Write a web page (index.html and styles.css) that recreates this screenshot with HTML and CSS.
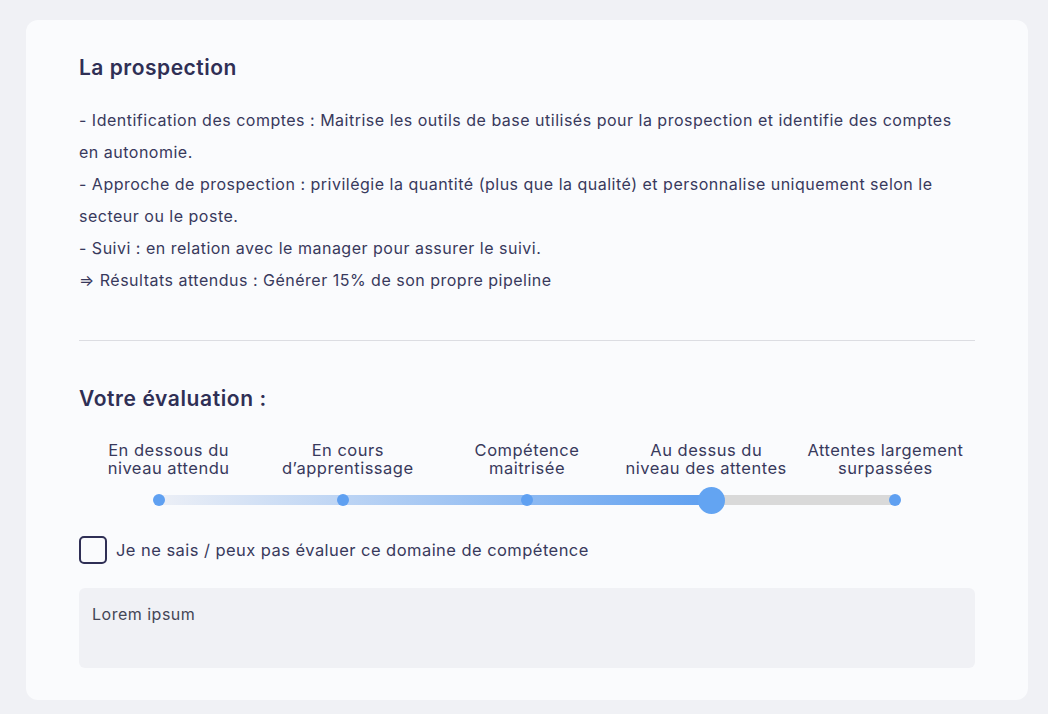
FILE: index.html
```html
<!DOCTYPE html>
<html lang="fr">
<head>
<meta charset="utf-8">
<link rel="stylesheet" href="styles.css">
</head>
<body>
<div class="page">
  <section class="card">
    <h2 class="title">La prospection</h2>
    <div class="desc">
      <p>- Identification des comptes : Maitrise les outils de base utilisés pour la prospection et identifie des comptes en autonomie.</p>
      <p>- Approche de prospection : privilégie la quantité (plus que la qualité) et personnalise uniquement selon le secteur ou le poste.</p>
      <p>- Suivi : en relation avec le manager pour assurer le suivi.</p>
      <p>⇒ Résultats attendus : Générer 15% de son propre pipeline</p>
    </div>
    <hr class="divider">
    <h2 class="eval-title">Votre évaluation :</h2>
    <div class="slider">
      <div class="labels">
        <span>En dessous du<br>niveau attendu</span>
        <span>En cours<br>d’apprentissage</span>
        <span>Compétence<br>maitrisée</span>
        <span>Au dessus du<br>niveau des attentes</span>
        <span>Attentes largement<br>surpassées</span>
      </div>
      <div class="track-wrap">
        <div class="track">
          <div class="fill"></div>
          <span class="dot d0"></span>
          <span class="dot d1"></span>
          <span class="dot d2"></span>
          <span class="thumb"></span>
          <span class="dot d4"></span>
        </div>
      </div>
    </div>
    <label class="check">
      <span class="box"></span>
      <span>Je ne sais / peux pas évaluer ce domaine de compétence</span>
    </label>
    <div class="comment">Lorem ipsum</div>
  </section>
</div>
</body>
</html>
```
FILE: styles.css
```css
* { box-sizing: border-box; }
html, body { margin: 0; padding: 0; }
body {
  background: #f0f1f5;
  font-family: "Inter", "Liberation Sans", sans-serif;
  color: #38395c;
  width: 1048px;
  height: 714px;
  overflow: hidden;
}
.page { padding: 20px 20px 0 26px; }
.card {
  width: 1002px;
  height: 680px;
  background: #fafbfd;
  border-radius: 12px;
  padding: 34px 53px 0 53px;
}
.title {
  margin: 0;
  font-size: 21px;
  font-weight: 600;
  letter-spacing: 0.5px;
  color: #2f2f55;
  line-height: 28px;
}
.desc {
  margin-top: 22px;
  font-size: 16px;
  letter-spacing: 0.5px;
  line-height: 32px;
}
.desc p { margin: 0; }
.divider {
  border: 0;
  border-top: 1px solid #dcdde2;
  margin: 44px 0 0 0;
}
.eval-title {
  margin: 44px 0 0 0;
  font-size: 21px;
  font-weight: 600;
  letter-spacing: 0.6px;
  color: #2f2f55;
  line-height: 28px;
}
.slider { margin-top: 28px; }
.labels {
  display: grid;
  grid-template-columns: repeat(5, 1fr);
  text-align: center;
  font-size: 16.5px;
  letter-spacing: 0.5px;
  line-height: 18px;
  color: #38395c;
}
.track-wrap { padding: 18px 80px 0 80px; }
.track {
  position: relative;
  height: 10px;
  background: #d9d9d9;
}
.fill {
  width: 75%;
  height: 100%;
  background: linear-gradient(to right, #eceff6, #5e9ff0);
}
.dot {
  position: absolute;
  top: 50%;
  width: 12px;
  height: 12px;
  margin: -6px 0 0 -6px;
  border-radius: 50%;
  background: #5fa0f1;
}
.d0 { left: 0; }
.d1 { left: 25%; }
.d2 { left: 50%; }
.d4 { left: 100%; }
.thumb {
  position: absolute;
  top: 50%;
  left: 75%;
  width: 27px;
  height: 27px;
  margin: -13.5px 0 0 -13.5px;
  border-radius: 50%;
  background: #63a4f2;
}
.check {
  display: flex;
  align-items: center;
  gap: 9px;
  margin-top: 31px;
  font-size: 16.5px;
  letter-spacing: 0.45px;
  color: #38395c;
}
.box {
  width: 28px;
  height: 28px;
  border: 2px solid #2f2f55;
  border-radius: 5px;
  flex: none;
}
.comment {
  margin-top: 24px;
  height: 80px;
  background: #f0f1f5;
  border-radius: 6px;
  padding: 16px 13px;
  font-size: 16px;
  letter-spacing: 0.5px;
  color: #444655;
  line-height: 20px;
}
```
